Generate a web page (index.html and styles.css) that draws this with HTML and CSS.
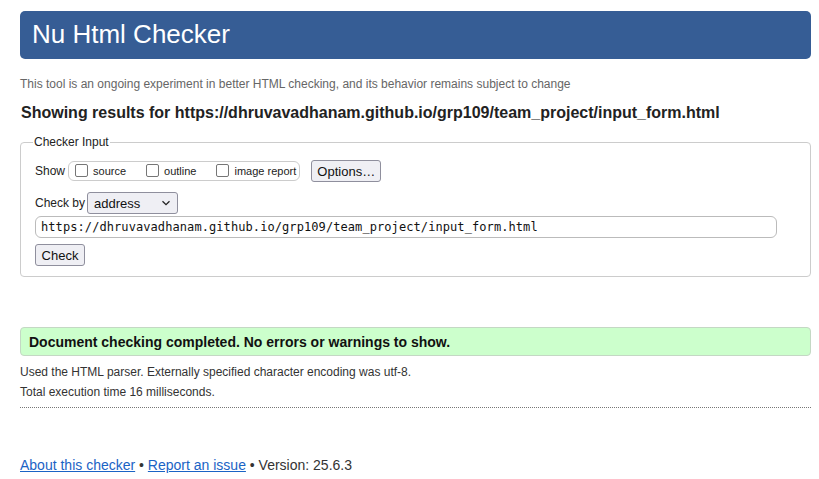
FILE: index.html
```html
<!DOCTYPE html>
<html lang="en">
<head>
<meta charset="utf-8">
<title>Nu Html Checker</title>
<link rel="stylesheet" href="styles.css">
</head>
<body>
<div class="page">
  <header class="banner"><h1 class="title">Nu Html Checker</h1></header>
  <p class="tagline">This tool is an ongoing experiment in better HTML checking, and its behavior remains subject to change</p>
  <h2 class="results">Showing results for https://dhruvavadhanam.github.io/grp109/team_project/input_form.html</h2>
  <fieldset class="checker">
    <legend class="legend">Checker Input</legend>
    <div class="row show-row">
      <span class="label">Show</span>
      <span class="pill">
        <label class="opt"><span class="box"></span>source</label>
        <label class="opt"><span class="box"></span>outline</label>
        <label class="opt"><span class="box"></span>image report</label>
      </span>
      <span class="btn btn-options">Options…</span>
    </div>
    <div class="row by-row">
      <span class="label">Check by</span>
      <span class="select">address<svg class="chev" width="10" height="6" viewBox="0 0 10 6"><path d="M1.5 1.2 L5 4.6 L8.5 1.2" fill="none" stroke="#222" stroke-width="1.3"/></svg></span>
    </div>
    <div class="url">https://dhruvavadhanam.github.io/grp109/team_project/input_form.html</div>
    <div class="row check-row"><span class="btn btn-check">Check</span></div>
  </fieldset>
  <div class="success">Document checking completed. No errors or warnings to show.</div>
  <p class="info first">Used the HTML parser. Externally specified character encoding was utf-8.</p>
  <p class="info">Total execution time 16 milliseconds.</p>
  <div class="rule"></div>
  <footer class="footer"><a href="#">About this checker</a> • <a href="#">Report an issue</a> • Version: 25.6.3</footer>
</div>
</body>
</html>
```
FILE: styles.css
```css
html, body { margin: 0; padding: 0; background: #fff; }
body { font-family: "Liberation Sans", Arial, sans-serif; color: #222; }
.page { padding: 11px 8px 0 20px; }
.banner { background: #365d95; border-radius: 5px; height: 48px; display: flex; align-items: center; padding-left: 12px; }
.title { margin: 0; font-weight: normal; font-size: 26px; color: #fff; line-height: 1; position: relative; top: -1px; }
.tagline { margin: 18px 0 0; font-size: 12px; color: #666; line-height: 14px; }
.results { margin: 13px 0 0 1px; font-size: 16px; font-weight: bold; color: #222; line-height: 18px; }
.checker { margin: 13px 0 0; border: 1px solid #ccc; border-radius: 4px; padding: 4px 0 10px 14px; min-width: 0; }
.legend { font-size: 12px; padding: 0 1px; margin-left: -2px; color: #222; }
.row { display: flex; align-items: center; font-size: 12px; }
.label { margin-right: 3px; }
.show-row { margin-top: 7px; height: 22px; }
.pill { display: inline-flex; align-items: center; border: 1px solid #ccc; border-radius: 6px; height: 18px; padding: 0 3px 0 6px; }
.opt { display: inline-flex; align-items: center; font-size: 11px; margin-right: 20px; }
.opt:last-child { margin-right: 0; }
.box { width: 13px; height: 13px; border: 1px solid #767676; border-radius: 2px; margin-right: 5px; background: #fff; box-sizing: border-box; position: relative; top: -1px; }
.btn { display: inline-flex; align-items: center; justify-content: center; background: #efeff4; border: 1px solid #8f8f9d; border-radius: 3px; box-sizing: border-box; color: #111; font-size: 13px; }
.btn-options { margin-left: 11px; width: 70px; height: 22px; }
.by-row { margin-top: 10px; height: 22px; }
.by-row .label { margin-right: 2px; }
.select { display: inline-flex; align-items: center; justify-content: space-between; width: 91px; height: 22px; box-sizing: border-box; border: 1px solid #8f8f9d; border-radius: 3px; background: #efeff4; padding: 0 6px 0 6px; font-size: 13px; color: #111; }
.chev { display: block; }
.url { margin-top: 2px; width: 742px; height: 22px; box-sizing: border-box; border: 1px solid #bbb; border-radius: 6px; font-family: "DejaVu Sans Mono", "Liberation Mono", monospace; font-size: 12px; line-height: 20px; padding-left: 5px; color: #111; letter-spacing: 0.08px; }
.check-row { margin-top: 6px; }
.btn-check { width: 50px; height: 22px; }
.success { margin-top: 50px; height: 29px; box-sizing: border-box; background: #ccffcc; border: 1px solid #c4d8c4; border-radius: 4px; display: flex; align-items: center; padding-left: 8px; font-size: 14px; font-weight: bold; color: #111; }
.info { margin: 0; font-size: 12px; color: #333; line-height: 20px; }
.info.first { margin-top: 6px; }
.rule { margin-top: 5px; border-top: 1px dotted #777; }
.footer { margin-top: 49px; font-size: 14px; color: #333; }
.footer a { color: #1a63c5; text-decoration: underline; }
```
